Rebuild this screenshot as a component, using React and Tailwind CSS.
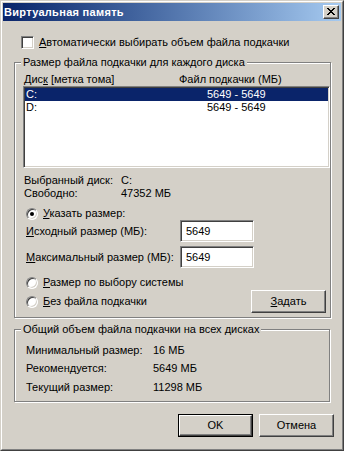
import React from "react";

const font = { fontFamily: '"Liberation Sans", Arial, sans-serif' };

const sunken =
  "border border-t-[#808080] border-l-[#808080] border-r-white border-b-white shadow-[inset_1px_1px_0_#404040,inset_-1px_-1px_0_#d4d0c8]";

const etched =
  "border border-[#808080] shadow-[1px_1px_0_#fff,inset_1px_1px_0_#fff]";

function Radio({ checked }) {
  return (
    <span className="relative w-[12px] h-[12px] rounded-full bg-white border border-t-[#808080] border-l-[#808080] border-r-white border-b-white shadow-[inset_1px_1px_0_#404040,inset_-1px_-1px_0_#d4d0c8] flex items-center justify-center shrink-0">
      {checked && <span className="w-[4px] h-[4px] rounded-full bg-black" />}
    </span>
  );
}

function Button({ children, isDefault }) {
  const inner = (
    <div className="w-full h-full flex items-center justify-center border border-t-white border-l-white border-r-[#404040] border-b-[#404040] shadow-[inset_-1px_-1px_0_#808080] bg-[#d4d0c8]">
      {children}
    </div>
  );
  if (isDefault) {
    return <div className="w-[75px] h-[23px] border border-black">{inner}</div>;
  }
  return <div className="w-[75px] h-[23px]">{inner}</div>;
}

function CloseGlyph() {
  const px = [
    [0, 0], [1, 0], [6, 0], [7, 0],
    [1, 1], [2, 1], [5, 1], [6, 1],
    [2, 2], [3, 2], [4, 2], [5, 2],
    [3, 3], [4, 3],
    [2, 4], [3, 4], [4, 4], [5, 4],
    [1, 5], [2, 5], [5, 5], [6, 5],
    [0, 6], [1, 6], [6, 6], [7, 6],
  ];
  return (
    <svg width="8" height="7" viewBox="0 0 8 7" shapeRendering="crispEdges">
      {px.map(([x, y]) => (
        <rect key={`${x}-${y}`} x={x} y={y} width="1" height="1" fill="#000" />
      ))}
    </svg>
  );
}

export default function App() {
  return (
    <div
      className="w-[344px] h-[451px] bg-[#d4d0c8] text-[11px] leading-[13px] text-black border border-t-[#d4d0c8] border-l-[#d4d0c8] border-r-[#404040] border-b-[#404040]"
      style={font}
    >
      <div className="w-full h-full border border-t-white border-l-white border-r-[#808080] border-b-[#808080] p-[1px] flex flex-col">
        {/* title bar */}
        <div className="h-[18px] bg-gradient-to-r from-[#0a246a] to-[#a6caf0] flex items-center justify-between pl-[1px] pr-[2px] shrink-0">
          <span className="text-white font-bold text-[11px] tracking-[0.3px]">Виртуальная память</span>
          <div className="w-[16px] h-[14px] border border-t-white border-l-white border-r-[#404040] border-b-[#404040] shadow-[inset_-1px_-1px_0_#808080] bg-[#d4d0c8] flex items-center justify-center pb-[1px]">
            <CloseGlyph />
          </div>
        </div>

        {/* content */}
        <div className="flex flex-col pl-[11px]">
          <div className="mt-[15px] ml-[7px] flex items-center gap-[5px] h-[13px]">
            <span className={`w-[13px] h-[13px] bg-white ${sunken}`} />
            <span>
              <u>А</u>втоматически выбирать объем файла подкачки
            </span>
          </div>

          <fieldset className={`mt-[7px] w-[316px] pl-[8px] pb-[4px] ${etched}`}>
            <legend className="ml-[-2px] px-[2px] bg-[#d4d0c8]">
              Размер файла подкачки для каждого диска
            </legend>
            <div className="mt-[4px] flex h-[13px]">
              <span className="pl-[1px] w-[156px]">
                Дис<u>к</u> [метка тома]
              </span>
              <span>Файл подкачки (МБ)</span>
            </div>
            <div className={`w-[307px] h-[82px] bg-white flex flex-col p-[1px] ${sunken}`}>
              <div className="h-[13px] bg-[#0a246a] text-white flex">
                <span className="pl-[1px] w-[182px]">C:</span>
                <span>5649 - 5649</span>
              </div>
              <div className="h-[13px] flex">
                <span className="pl-[1px] w-[182px]">D:</span>
                <span>5649 - 5649</span>
              </div>
            </div>

            <div className="mt-[6px] flex h-[13px] pl-[1px]">
              <span className="w-[97px]">Выбранный диск:</span>
              <span>C:</span>
            </div>
            <div className="flex h-[13px] pl-[1px]">
              <span className="w-[97px]">Свободно:</span>
              <span>47352 МБ</span>
            </div>

            <div className="mt-[7px] flex items-center gap-[5px] h-[13px] pl-[3px]">
              <Radio checked />
              <span>
                <u>У</u>казать размер:
              </span>
            </div>

            <div className="flex items-center h-[22px] pl-[3px]">
              <span className="w-[154px]">
                <u>И</u>сходный размер (МБ):
              </span>
              <div className={`w-[74px] h-[22px] bg-white pl-[5px] pt-[4px] ${sunken}`}>5649</div>
            </div>
            <div className="mt-[4px] flex items-center h-[22px] pl-[3px]">
              <span className="w-[154px]">
                <u>М</u>аксимальный размер (МБ):
              </span>
              <div className={`w-[74px] h-[22px] bg-white pl-[5px] pt-[4px] ${sunken}`}>5649</div>
            </div>

            <div className="mt-[8px] flex items-center gap-[5px] h-[13px] pl-[3px]">
              <Radio />
              <span>
                <u>Р</u>азмер по выбору системы
              </span>
            </div>
            <div className="mt-[1px] flex items-center justify-between h-[23px] pl-[3px] pr-[4px]">
              <div className="flex items-center gap-[5px]">
                <Radio />
                <span>
                  <u>Б</u>ез файла подкачки
                </span>
              </div>
              <Button>
                <span>
                  <u>З</u>адать
                </span>
              </Button>
            </div>
          </fieldset>

          <fieldset className={`mt-[5px] w-[316px] pl-[8px] pb-[7px] ${etched}`}>
            <legend className="ml-[-2px] px-[2px] bg-[#d4d0c8]">
              Общий объем файла подкачки на всех дисках
            </legend>
            <div className="mt-[8px] flex h-[13px] pl-[3px]">
              <span className="w-[127px]">Минимальный размер:</span>
              <span>16 МБ</span>
            </div>
            <div className="mt-[5px] flex h-[13px] pl-[3px]">
              <span className="w-[127px]">Рекомендуется:</span>
              <span>5649 МБ</span>
            </div>
            <div className="mt-[6px] flex h-[13px] pl-[3px]">
              <span className="w-[127px]">Текущий размер:</span>
              <span>11298 МБ</span>
            </div>
          </fieldset>

          <div className="mt-[12px] flex justify-end gap-[6px] w-[320px]">
            <Button isDefault>OK</Button>
            <Button>Отмена</Button>
          </div>
        </div>
      </div>
    </div>
  );
}
